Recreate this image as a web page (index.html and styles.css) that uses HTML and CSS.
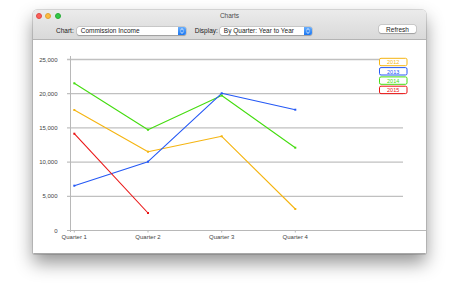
FILE: index.html
```html
<!DOCTYPE html>
<html lang="en">
<head>
  <meta charset="UTF-8" />
  <title>Charts</title>
  <link rel="stylesheet" href="styles.css">
</head>
<body>
  <div class="window">
    <div class="titlebar">
      <div class="lights">
        <span class="light red"></span>
        <span class="light yellow"></span>
        <span class="light green"></span>
      </div>
      <div class="title">Charts</div>
    </div>

    <div class="toolbar">
      <label class="tb-label">Chart:</label>
      <div class="popup popup-chart">
        <span class="popup-text">Commission Income</span>
        <span class="stepper">
          <svg width="8" height="8" viewBox="0 0 8 8"><path d="M2.3 3.2 L4 1.6 L5.7 3.2 M2.3 4.8 L4 6.4 L5.7 4.8" fill="none" stroke="#fff" stroke-width="0.8"/></svg>
        </span>
      </div>
      <label class="tb-label tb-display">Display:</label>
      <div class="popup popup-display">
        <span class="popup-text">By Quarter: Year to Year</span>
        <span class="stepper">
          <svg width="8" height="8" viewBox="0 0 8 8"><path d="M2.3 3.2 L4 1.6 L5.7 3.2 M2.3 4.8 L4 6.4 L5.7 4.8" fill="none" stroke="#fff" stroke-width="0.8"/></svg>
        </span>
      </div>
      <div class="spacer"></div>
      <button class="refresh">Refresh</button>
    </div>

    <div class="content">
      <svg class="chart" width="393" height="213" viewBox="33 41 393 213">
        <!-- grid -->
        <g class="grid">
          <line x1="67" y1="60.5" x2="403" y2="60.5"/>
          <line x1="67" y1="94.7" x2="403" y2="94.7"/>
          <line x1="67" y1="128.9" x2="403" y2="128.9"/>
          <line x1="67" y1="163.1" x2="403" y2="163.1"/>
          <line x1="67" y1="197.3" x2="403" y2="197.3"/>
        </g>
        <g class="axis">
          <line x1="70.5" y1="57" x2="70.5" y2="233"/>
          <line x1="67" y1="231.5" x2="426" y2="231.5"/>
          <line x1="74.3" y1="231.5" x2="74.3" y2="233.5"/>
          <line x1="148" y1="231.5" x2="148" y2="233.5"/>
          <line x1="221.7" y1="231.5" x2="221.7" y2="233.5"/>
          <line x1="295.3" y1="231.5" x2="295.3" y2="233.5"/>
        </g>

        <g text-anchor="end">
          <text x="57.5" y="62.5">25,000</text>
          <text x="57.5" y="96.7">20,000</text>
          <text x="57.5" y="130.9">15,000</text>
          <text x="57.5" y="165.1">10,000</text>
          <text x="57.5" y="199.3">5,000</text>
          <text x="57.5" y="233.5">0</text>
        </g>
        <g text-anchor="middle">
          <text x="74.3" y="240">Quarter 1</text>
          <text x="148" y="240">Quarter 2</text>
          <text x="221.7" y="240">Quarter 3</text>
          <text x="295.3" y="240">Quarter 4</text>
        </g>

        <!-- series -->
        <polyline class="line s2014" points="74.3,84.3 148,130.7 221.7,96.5 295.3,148.7"/>
        <polyline class="line s2012" points="74.3,111 148,152.7 221.7,137.3 295.3,210"/>
        <polyline class="line s2013" points="74.3,186.7 148,162.7 221.7,94.3 295.3,110.7"/>
        <polyline class="line s2015" points="74.3,134.7 148,214"/>

        <g class="dots s2014">
          <rect x="73.3" y="83.3" width="2" height="2"/>
          <rect x="147" y="129.7" width="2" height="2"/>
          <rect x="220.7" y="95.5" width="2" height="2"/>
          <rect x="294.3" y="147.7" width="2" height="2"/>
        </g>
        <g class="dots s2012">
          <rect x="73.3" y="110" width="2" height="2"/>
          <rect x="147" y="151.7" width="2" height="2"/>
          <rect x="220.7" y="136.3" width="2" height="2"/>
          <rect x="294.3" y="209" width="2" height="2"/>
        </g>
        <g class="dots s2013">
          <rect x="73.3" y="185.7" width="2" height="2"/>
          <rect x="147" y="161.7" width="2" height="2"/>
          <rect x="220.7" y="93.3" width="2" height="2"/>
          <rect x="294.3" y="109.7" width="2" height="2"/>
        </g>
        <g class="dots s2015">
          <rect x="73.3" y="133.7" width="2" height="2"/>
          <rect x="147" y="213" width="2" height="2"/>
        </g>

        <!-- legend -->
        <g class="legend" text-anchor="middle">
          <g class="s2012">
            <rect x="379.5" y="59.3" width="27.5" height="7.4" rx="1.5"/>
            <text x="393.2" y="65.2">2012</text>
          </g>
          <g class="s2013">
            <rect x="379.5" y="68.6" width="27.5" height="7.4" rx="1.5"/>
            <text x="393.2" y="74.5">2013</text>
          </g>
          <g class="s2014">
            <rect x="379.5" y="77.9" width="27.5" height="7.4" rx="1.5"/>
            <text x="393.2" y="83.8">2014</text>
          </g>
          <g class="s2015">
            <rect x="379.5" y="87.2" width="27.5" height="7.4" rx="1.5"/>
            <text x="393.2" y="93.1">2015</text>
          </g>
        </g>
      </svg>
    </div>
  </div>
</body>
</html>
```

FILE: styles.css
```css
:root {
  --c2012: #f5b512;
  --c2013: #2458f5;
  --c2014: #45dc10;
  --c2015: #ea1414;
}

body {
  margin: 0;
  background: #fff;
  font-family: "Liberation Sans", Arial, sans-serif;
  padding: 10px 0 0 33px;
  width: 460px;
  height: 288px;
  box-sizing: border-box;
  overflow: hidden;
}

.window {
  width: 393px;
  height: 244px;
  border-radius: 4px 4px 1px 1px;
  box-shadow: 0 0 0 0.5px rgba(0, 0, 0, 0.25), 0 9px 18px rgba(0, 0, 0, 0.42);
  overflow: hidden;
  display: flex;
  flex-direction: column;
  background: #fff;
}

.titlebar {
  height: 11px;
  position: relative;
  background: linear-gradient(#ebebeb, #e4e4e4);
  display: flex;
  align-items: center;
  justify-content: center;
}

.lights {
  position: absolute;
  left: 3px;
  top: 2.5px;
  display: flex;
  gap: 3.3px;
}

.light {
  width: 6px;
  height: 6px;
  border-radius: 50%;
  box-sizing: border-box;
}
.light.red { background: #fc605b; border: 0.5px solid #de4a45; }
.light.yellow { background: #fdbc40; border: 0.5px solid #dea236; }
.light.green { background: #34c84a; border: 0.5px solid #27aa35; }

.title {
  font-size: 6.5px;
  color: #4d4d4d;
  padding-top: 1px;
}

.toolbar {
  height: 19px;
  background: linear-gradient(#e4e4e4, #d9d9d9);
  border-bottom: 1px solid #b4b4b4;
  display: flex;
  align-items: center;
  padding: 0 10px 0 23px;
  font-size: 6.5px;
  color: #222;
}

.tb-label {
  margin-right: 3px;
  padding-top: 1px;
}

.tb-display {
  margin-left: 9px;
  margin-right: 2px;
}

.popup {
  height: 8.5px;
  background: #fff;
  border-radius: 2px;
  box-shadow: 0 0 0 0.5px rgba(0, 0, 0, 0.18), 0 0.5px 1px rgba(0, 0, 0, 0.2);
  display: flex;
  align-items: center;
  margin-top: 2px;
}

.popup-chart { width: 109px; }
.popup-display { width: 92px; }

.popup-text {
  flex: 1;
  padding-left: 4px;
  white-space: nowrap;
}

.stepper {
  width: 8px;
  height: 8.5px;
  background: linear-gradient(#69aefb, #1a76f2);
  border-radius: 0 2px 2px 0;
  display: flex;
  align-items: center;
  justify-content: center;
}

.spacer { flex: 1; }

.refresh {
  width: 37px;
  height: 8px;
  padding: 0;
  border: none;
  border-radius: 2px;
  background: #fff;
  box-shadow: 0 0 0 0.5px rgba(0, 0, 0, 0.18), 0 0.5px 1px rgba(0, 0, 0, 0.2);
  font-family: inherit;
  font-size: 6.5px;
  color: #222;
  margin-top: -1px;
}

.content {
  flex: 1;
  background: #fff;
  border-bottom: 1px solid #a8a8a8;
}

.chart {
  display: block;
}

.chart text {
  font-family: "Liberation Sans", Arial, sans-serif;
  font-size: 6px;
  fill: #444;
}

.grid line { stroke: #c0c0c0; stroke-width: 1.3; }
.axis line { stroke: #b8b8b8; stroke-width: 1; }

.line {
  fill: none;
  stroke-width: 1.1;
  stroke-linejoin: round;
}
.line.s2012 { stroke: var(--c2012); }
.line.s2013 { stroke: var(--c2013); }
.line.s2014 { stroke: var(--c2014); }
.line.s2015 { stroke: var(--c2015); }

.dots.s2012 { fill: var(--c2012); }
.dots.s2013 { fill: var(--c2013); }
.dots.s2014 { fill: var(--c2014); }
.dots.s2015 { fill: var(--c2015); }

.legend rect { fill: #fff; stroke-width: 1; }
.legend text { font-size: 5.5px; }
.legend .s2012 rect { stroke: var(--c2012); }
.legend .s2013 rect { stroke: var(--c2013); }
.legend .s2014 rect { stroke: var(--c2014); }
.legend .s2015 rect { stroke: var(--c2015); }
.chart .legend .s2012 text { fill: var(--c2012); }
.chart .legend .s2013 text { fill: var(--c2013); }
.chart .legend .s2014 text { fill: var(--c2014); }
.chart .legend .s2015 text { fill: var(--c2015); }
```
